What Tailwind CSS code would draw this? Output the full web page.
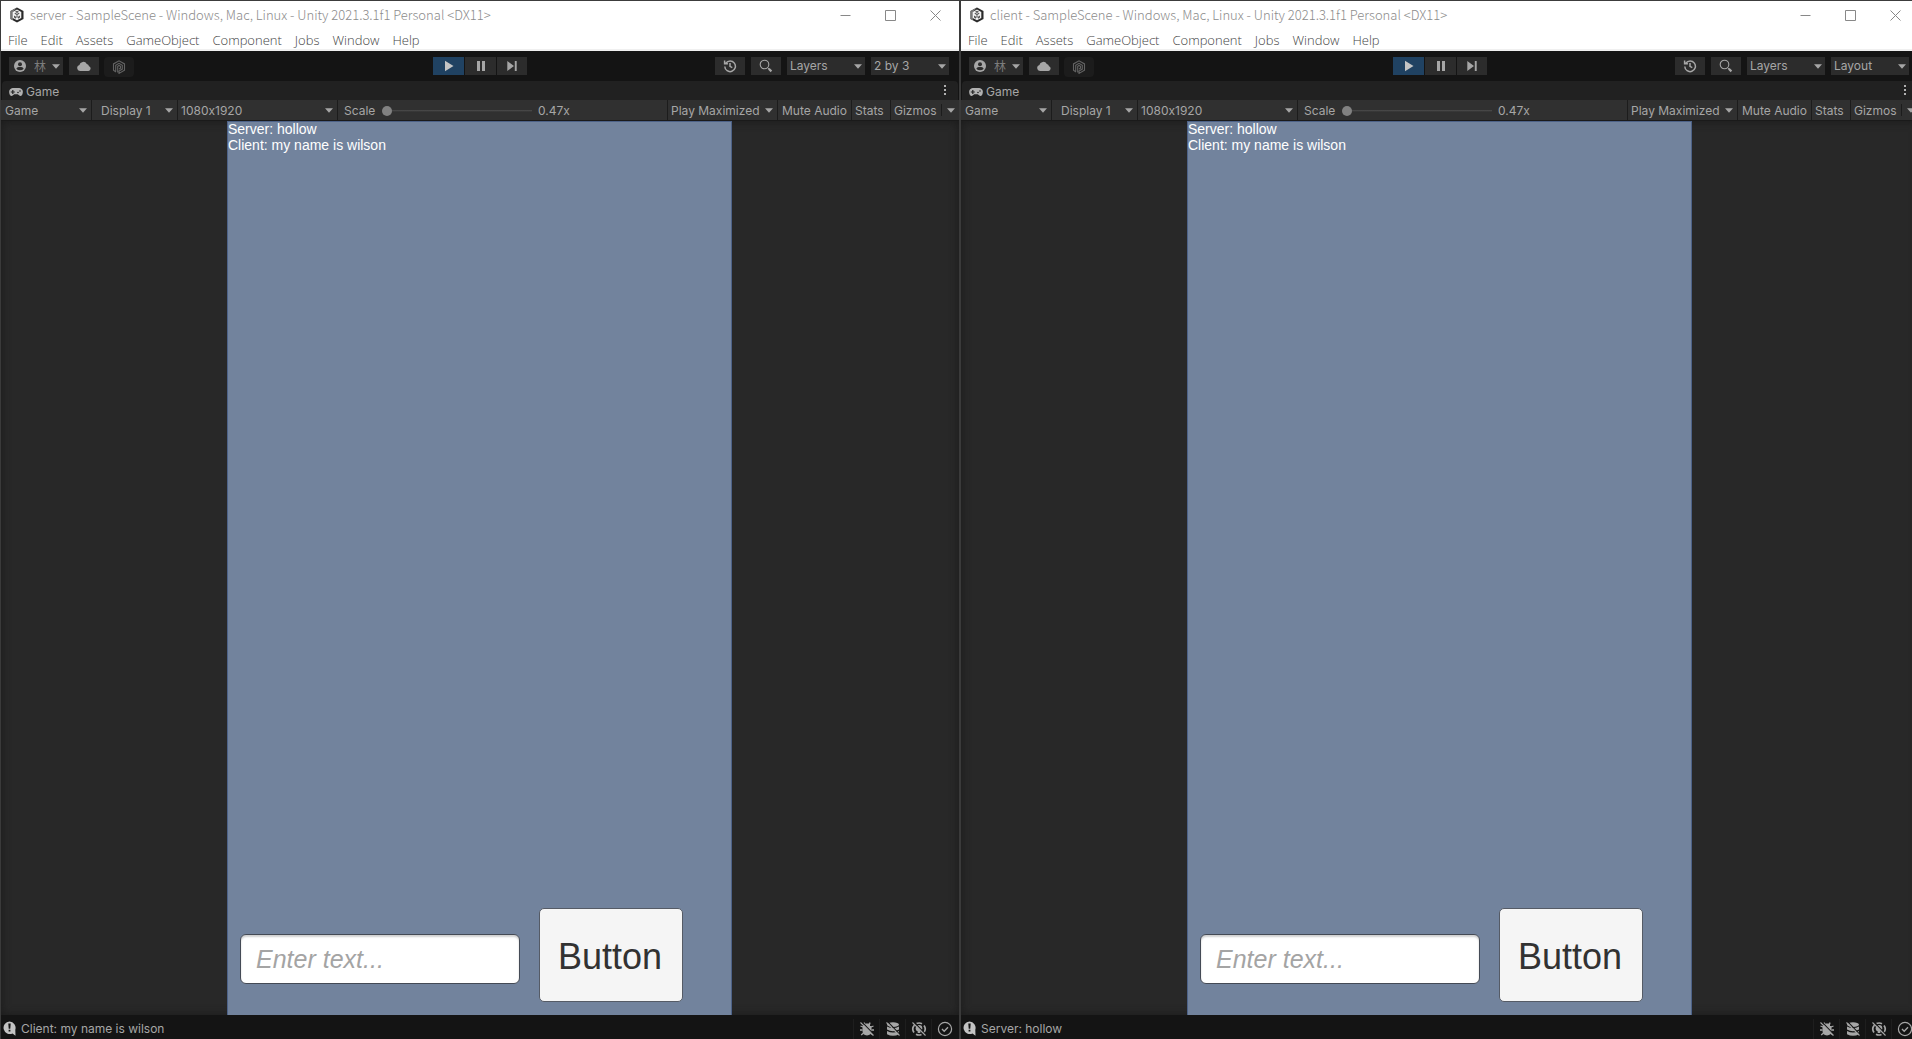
<!DOCTYPE html>
<html lang="en">
<head>
<meta charset="utf-8">
<title>Unity editors: server and client</title>
<script src="https://cdn.jsdelivr.net/npm/@tailwindcss/browser@4"></script>
</head>
<body class="h-screen overflow-hidden bg-[#282828]">

<svg class="hidden" aria-hidden="true">
  <symbol id="unity" viewBox="0 0 16 16">
    <path d="M8 .5 14.500 4v8L8 15.500 1.500 12V4z" fill="#2a2a2a"/>
    <path d="M8 .5 1.500 4v8L4 13.300V5z" fill="#777"/>
    <path d="M8 2.500 12.300 5v6L8 13.300 3.700 11V5z" fill="#f2f2f2"/>
    <path d="M8 8.300v2.500M8 7.500 5.800 6.300M8 7.500l2.200-1.200" stroke="#555" stroke-width="1.200"/>
    <path d="M5 8.500 7 9.700v2L5 10.600zM11 8.500 9 9.700v2l2-1.100zM8 3.700l2 1.100-2 1.100-2-1.100z" fill="#555"/>
  </symbol>
  <symbol id="caret" viewBox="0 0 8 5"><path d="M0 .3h8L4 4.700z" fill="#a6a6a6"/></symbol>
  <symbol id="user" viewBox="0 0 12 12">
    <circle cx="6" cy="6" r="6" fill="#a6a6a6"/><circle cx="6" cy="4.200" r="2" fill="#2c2c2c"/>
    <path d="M2.300 8.800Q3 7 4.700 7h2.600Q9 7 9.700 8.800 8.300 10.300 6 10.300T2.300 8.800" fill="#2c2c2c"/>
  </symbol>
  <symbol id="cloud" viewBox="0 0 14 10"><path d="M3 10a3 3 0 0 1-.6-5.900A4 4 0 0 1 9.800 2.900 3 3 0 0 1 12 5.200 2.500 2.500 0 0 1 11.500 10z" fill="#a6a6a6"/></symbol>
  <symbol id="plastic" viewBox="0 0 14 14">
    <path d="M4 12 1.500 10.300V3.900L7 .8l5.500 3.100v6.400L7 13.400V11l3.300-1.900V5.200L7 3.300 3.700 5.200V11.600M5.700 12.500V6.300L7 5.500l1.500.9v1.700L7 9" fill="none" stroke="#636363" stroke-width="1.100"/>
  </symbol>
  <symbol id="history" viewBox="0 0 14 14">
    <path d="M2.800 4.200A5.300 5.300 0 1 1 1.800 7.500M1.600 1.600v3.200h3.300M7 4v3.400L9.300 8.600" fill="none" stroke="#a6a6a6" stroke-width="1.500"/>
  </symbol>
  <symbol id="search" viewBox="0 0 14 14">
    <circle cx="5.500" cy="5.500" r="4.300" fill="none" stroke="#a6a6a6" stroke-width="1.100"/>
    <path d="m8.700 8.700 1.200 1.200" stroke="#a6a6a6"/><path d="m9.800 9.800 2.600 2.600" stroke="#a6a6a6" stroke-width="2.200"/>
  </symbol>
  <symbol id="pad" viewBox="0 0 14 8">
    <path d="M3.700 0h6.600a3.800 3.800 0 0 1 3.500 4.500C13.600 6.800 12.700 8 11.500 8S9.700 6.600 8.700 6.200H5.300C4.300 6.600 3.700 8 2.500 8S.4 6.800.2 4.500A3.800 3.800 0 0 1 3.700 0" fill="#b0b0b0"/>
    <path d="M3.800 2v4M1.800 4h4" stroke="#212121" stroke-width="1.200"/><circle cx="9" cy="4.500" r=".8" fill="#212121"/><circle cx="11" cy="3" r=".8" fill="#212121"/>
  </symbol>
  <symbol id="play" viewBox="0 0 10 12"><path d="M1 .8 9.500 6 1 11.200z" fill="#c4c4c4"/></symbol>
  <symbol id="pause" viewBox="0 0 10 12"><path d="M1 1h3v10H1zM6 1h3v10H6z" fill="#a6a6a6"/></symbol>
  <symbol id="step" viewBox="0 0 10 12"><path d="M.3 1 7 6 .3 11zM7.800 1h1.900v10H7.800z" fill="#a6a6a6"/></symbol>
  <symbol id="log" viewBox="0 0 14 16">
    <path d="M6.500.5a6.300 6.300 0 0 1 5.800 8.200l.2 6-3-2.200A6.300 6.300 0 1 1 6.500.5" fill="#c4c4c4"/><path d="M5.300 2.500h2.400l-.4 5.300H5.700zM5.600 8.800h1.800v1.800H5.600z" fill="#141414"/>
  </symbol>
  <symbol id="bug" viewBox="0 0 16 16">
    <path d="M5.500 3.500 5 1.500M10.500 3.500l.5-2M4 6 1.500 5M3.500 9H1M4.500 12l-2.300 2M12 6l2.500-1M12.500 9H15M11.500 12l2.300 2" stroke="#a6a6a6" stroke-width="1.300"/>
    <path d="M5 2.500h6V5H5zM3.500 5h9v5q0 4-4.500 4.500Q3.500 14 3.500 10z" fill="#a6a6a6"/>
    <path d="m2.800.8 12.500 13" stroke="#141414" stroke-width="1.200"/><path d="m1.500 1.500 13 13" stroke="#a6a6a6" stroke-width="1.100"/>
  </symbol>
  <symbol id="cache" viewBox="0 0 16 16">
    <ellipse cx="8" cy="3.600" rx="6" ry="2.400" fill="#a6a6a6"/>
    <path d="M2 5.400q6 3.200 12 0v3.200q-6 3.200-12 0zM2 10q6 3.200 12 0v3.200q-6 3-12 0z" fill="#a6a6a6"/>
    <path d="m2.800.8 12.500 13" stroke="#141414" stroke-width="1.200"/><path d="m1.500 1.500 13 13" stroke="#a6a6a6" stroke-width="1.100"/>
  </symbol>
  <symbol id="refresh" viewBox="0 0 16 16">
    <path d="M3 11.500A6 6 0 0 1 3.500 4M13 4.500a6 6 0 0 1-.5 7.500M5.500 2.600A6 6 0 0 1 11 2.800M5 13.200a6 6 0 0 0 5.500.2" fill="none" stroke="#a6a6a6" stroke-width="1.700"/>
    <circle cx="8" cy="7.300" r="3.300" fill="#a6a6a6"/><path d="M6.700 9.500h2.600V12H6.700z" fill="#a6a6a6"/>
    <path d="m2.800.8 12.500 13" stroke="#141414" stroke-width="1.200"/><path d="m1.500 1.500 13 13" stroke="#a6a6a6" stroke-width="1.100"/>
  </symbol>
  <symbol id="done" viewBox="0 0 16 16"><circle cx="8" cy="8" r="6.600" fill="none" stroke="#a6a6a6" stroke-width="1.200"/><path d="m5 8 2.200 2.200L11 6.200" fill="none" stroke="#a6a6a6" stroke-width="1.400"/></symbol>
</svg>

<template id="editor">
  <section class="flex h-full min-w-0 flex-1 flex-col border-t border-r border-l border-t-[#3c3c3c] border-r-[#3a3a3a] border-l-[#3a3a3a] font-['Inter',sans-serif] text-xs text-[#a6a6a6] [font-feature-settings:'calt'_0]">
    <header class="bg-white font-['Noto_Sans_CJK_TC',sans-serif] font-light">
      <div class="flex h-7 items-center pr-px">
        <svg class="ml-2 size-4"><use href="#unity"/></svg>
        <h1 class="ml-[5px] flex-1 text-[13px] whitespace-nowrap text-[#8c8c8c]"><span data-name></span> - SampleScene - Windows, Mac, Linux - Unity 2021.3.1f1 Personal &lt;DX11&gt;</h1>
        <button class="flex h-7 w-[45px] items-center justify-center" aria-label="Minimize"><svg class="size-[11px]" viewBox="0 0 11 11"><path d="M.5 5.500h10" stroke="#888"/></svg></button>
        <button class="flex h-7 w-[45px] items-center justify-center" aria-label="Maximize"><svg class="size-[11px]" viewBox="0 0 11 11"><path d="M.5.500h10v10H.5z" fill="none" stroke="#888"/></svg></button>
        <button class="flex h-7 w-[45px] items-center justify-center" aria-label="Close"><svg class="size-[11px]" viewBox="0 0 11 11"><path d="m.5.500 10 10m0-10-10 10" stroke="#888"/></svg></button>
      </div>
      <nav class="flex h-[22px] items-center gap-[13px] border-b-2 border-[#f0f0f0] pt-1 pl-[7px] font-['Open_Sans',sans-serif] text-[13px] text-[#444]">
        <a href="#">File</a><a href="#">Edit</a><a href="#">Assets</a><a href="#">GameObject</a><a href="#">Component</a><a href="#">Jobs</a><a href="#">Window</a><a href="#">Help</a>
      </nav>
    </header>

    <div class="grid h-[30px] grid-cols-[1fr_auto_1fr] items-center bg-[#141414] pr-[10px] pl-2">
      <div class="flex items-center">
        <button class="flex h-[18px] w-[54px] items-center justify-between bg-[#2c2c2c] pr-[3px] pl-[5px] font-['Noto_Sans_CJK_TC',sans-serif] text-xs leading-[18px] text-[#7c7c7c]"><svg class="size-3"><use href="#user"/></svg><span class="pl-0.5">林</span><svg class="h-[5px] w-2"><use href="#caret"/></svg></button>
        <button class="ml-[6px] flex h-[18px] w-[30px] items-center justify-center bg-[#2c2c2c]" aria-label="Cloud"><svg class="h-[10px] w-[14px]"><use href="#cloud"/></svg></button>
        <button class="mt-0.5 ml-[5px] flex h-5 w-[30px] items-center justify-center rounded-sm bg-[#1c1c1c]" aria-label="Plastic SCM"><svg class="size-[14px]"><use href="#plastic"/></svg></button>
      </div>
      <div class="flex gap-px pl-0.5">
        <button class="flex h-[18px] w-[31px] items-center justify-center bg-[#204262]" aria-label="Play"><svg class="h-3 w-[10px]"><use href="#play"/></svg></button>
        <button class="flex h-[18px] w-[31px] items-center justify-center bg-[#2c2c2c]" aria-label="Pause"><svg class="h-3 w-[10px]"><use href="#pause"/></svg></button>
        <button class="flex h-[18px] w-[30px] items-center justify-center bg-[#2c2c2c]" aria-label="Step"><svg class="h-3 w-[10px]"><use href="#step"/></svg></button>
      </div>
      <div class="flex justify-end gap-[6px]">
        <button class="flex h-[18px] w-[30px] items-center justify-center bg-[#2c2c2c]" aria-label="History"><svg class="size-[14px]"><use href="#history"/></svg></button>
        <button class="flex h-[18px] w-[30px] items-center justify-center bg-[#2c2c2c]" aria-label="Search"><svg class="size-[14px]"><use href="#search"/></svg></button>
        <label class="grid h-[18px] w-[78px] items-center bg-[#2c2c2c]">
          <select class="col-start-1 row-start-1 h-[18px] w-full appearance-none pl-[3px]" aria-label="Layers"><option>Layers</option></select>
          <svg class="pointer-events-none col-start-1 row-start-1 mr-[3px] h-[5px] w-2 justify-self-end"><use href="#caret"/></svg>
        </label>
        <label class="grid h-[18px] w-[78px] items-center bg-[#2c2c2c]">
          <select class="col-start-1 row-start-1 h-[18px] w-full appearance-none pl-[3px]" aria-label="Layout"><option data-layout></option></select>
          <svg class="pointer-events-none col-start-1 row-start-1 mr-[3px] h-[5px] w-2 justify-self-end"><use href="#caret"/></svg>
        </label>
      </div>
    </div>

    <div class="bg-[#141414] px-px">
      <div class="flex h-[19px] items-center justify-between rounded-t-sm bg-[#212121] pr-3 pl-[7px]">
        <h2 class="flex items-center gap-[3px] pt-0.5"><svg class="h-2 w-[14px]"><use href="#pad"/></svg>Game</h2>
        <button aria-label="Tab options"><svg class="h-[11px] w-[2px]" viewBox="0 0 2 11"><path d="M0 0h2v2H0zM0 4h2v2H0zM0 8h2v2H0z" fill="#b0b0b0"/></svg></button>
      </div>
    </div>

    <div class="flex h-[21px] border-b border-[#1a1a1a] bg-[#303030] pl-px whitespace-nowrap">
      <label class="grid w-[90px] items-center border-r border-[#1c1c1c]">
        <select class="col-start-1 row-start-1 w-full appearance-none pt-0.5 pl-[3px]" aria-label="View"><option>Game</option></select>
        <svg class="pointer-events-none col-start-1 row-start-1 mr-1 h-[5px] w-2 justify-self-end"><use href="#caret"/></svg>
      </label>
      <label class="grid w-[86px] items-center border-r border-[#1c1c1c]">
        <select class="col-start-1 row-start-1 w-full appearance-none pt-0.5 pl-[9px]" aria-label="Display"><option>Display 1</option></select>
        <svg class="pointer-events-none col-start-1 row-start-1 mr-1 h-[5px] w-2 justify-self-end"><use href="#caret"/></svg>
      </label>
      <label class="grid w-[160px] items-center border-r border-[#1c1c1c]">
        <select class="col-start-1 row-start-1 w-full appearance-none pt-0.5 pl-[3px]" aria-label="Resolution"><option>1080x1920</option></select>
        <svg class="pointer-events-none col-start-1 row-start-1 mr-1 h-[5px] w-2 justify-self-end"><use href="#caret"/></svg>
      </label>
      <label class="flex flex-1 items-center pt-0.5 pl-[6px]">
        <span class="w-[38px]">Scale</span>
        <input type="range" min="0" max="100" value="0" class="h-[10px] w-[150px] appearance-none bg-linear-to-b from-transparent from-40% via-[#4e4e4e] via-40% to-transparent to-60% [&::-webkit-slider-thumb]:size-[10px] [&::-webkit-slider-thumb]:appearance-none [&::-webkit-slider-thumb]:rounded-full [&::-webkit-slider-thumb]:bg-[#818181]">
        <span class="ml-[6px]">0.47x</span>
      </label>
      <button class="flex w-[110px] items-center justify-between border-l border-[#1c1c1c] pt-0.5 pr-1 pl-[3px]">Play Maximized<svg class="mb-0.5 h-[5px] w-2"><use href="#caret"/></svg></button>
      <button class="w-[74px] border-l border-[#1c1c1c] pt-0.5">Mute Audio</button>
      <button class="w-[39px] border-l border-[#1c1c1c] pt-0.5 pl-[3px] text-left">Stats</button>
      <button class="w-[51px] border-l border-[#1c1c1c] pt-0.5 pl-[3px] text-left">Gizmos</button>
      <button class="my-1 flex w-[18px] items-center justify-center border-l border-[#1c1c1c]" aria-label="Gizmo options"><svg class="h-[5px] w-2"><use href="#caret"/></svg></button>
    </div>

    <main class="flex flex-1 justify-center bg-[#282828] pr-px shadow-[inset_0_0_10px_#1a1a1a]">
      <div class="flex w-[505px] flex-col justify-between border-t border-r border-l border-t-[#4d6288] border-r-[#4d6288] border-l-[#4d6288] bg-[#72839d] font-['Liberation_Sans',Arial,sans-serif]">
        <p class="-mt-px text-sm leading-4 text-white">Server: hollow<br>Client: my name is wilson</p>
        <form class="flex items-end gap-[19px] pb-[13px] pl-3">
          <input type="text" placeholder="Enter text..." aria-label="Message" class="mb-[18px] h-[50px] w-[280px] rounded-md border border-[#444a55] bg-white px-[15px] text-[25px] shadow-[inset_0_2px_2px_#d0d0d0] placeholder:text-[#a4a4a4] placeholder:italic">
          <button type="button" class="h-[94px] w-[144px] rounded-[5px] border border-[#555b66] bg-[#f5f5f5] pt-1 pr-0.5 text-4xl text-[#323232]">Button</button>
        </form>
      </div>
    </main>

    <footer class="flex h-6 items-center bg-[#141414] pt-[3px] pr-0.5 pl-0.5">
      <svg class="h-4 w-[14px]"><use href="#log"/></svg>
      <span class="ml-1 flex-1" data-status></span>
      <button class="flex h-5 w-[26px] items-center justify-center border-l border-[#1e1e1e]" aria-label="Debugger"><svg class="size-4"><use href="#bug"/></svg></button>
      <button class="flex h-5 w-[26px] items-center justify-center border-l border-[#1e1e1e]" aria-label="Cache server"><svg class="size-4"><use href="#cache"/></svg></button>
      <button class="flex h-5 w-[26px] items-center justify-center border-l border-[#1e1e1e]" aria-label="Auto refresh"><svg class="size-4"><use href="#refresh"/></svg></button>
      <button class="flex h-5 w-[26px] items-center justify-center border-l border-[#1e1e1e]" aria-label="Background tasks"><svg class="size-4"><use href="#done"/></svg></button>
    </footer>
  </section>
</template>

<!-- The second window runs slightly past the right edge of the screen. -->
<div id="desktop" class="flex h-full w-[calc(100%+8px)]"></div>

<script>
const editors = [
  { name: 'server', layout: '2 by 3', status: 'Client: my name is wilson' },
  { name: 'client', layout: 'Layout', status: 'Server: hollow' },
];
for (const e of editors) {
  const win = document.getElementById('editor').content.cloneNode(true);
  win.querySelector('[data-name]').textContent = e.name;
  win.querySelector('[data-layout]').textContent = e.layout;
  win.querySelector('[data-status]').textContent = e.status;
  document.getElementById('desktop').append(win);
}
</script>
</body>
</html>
